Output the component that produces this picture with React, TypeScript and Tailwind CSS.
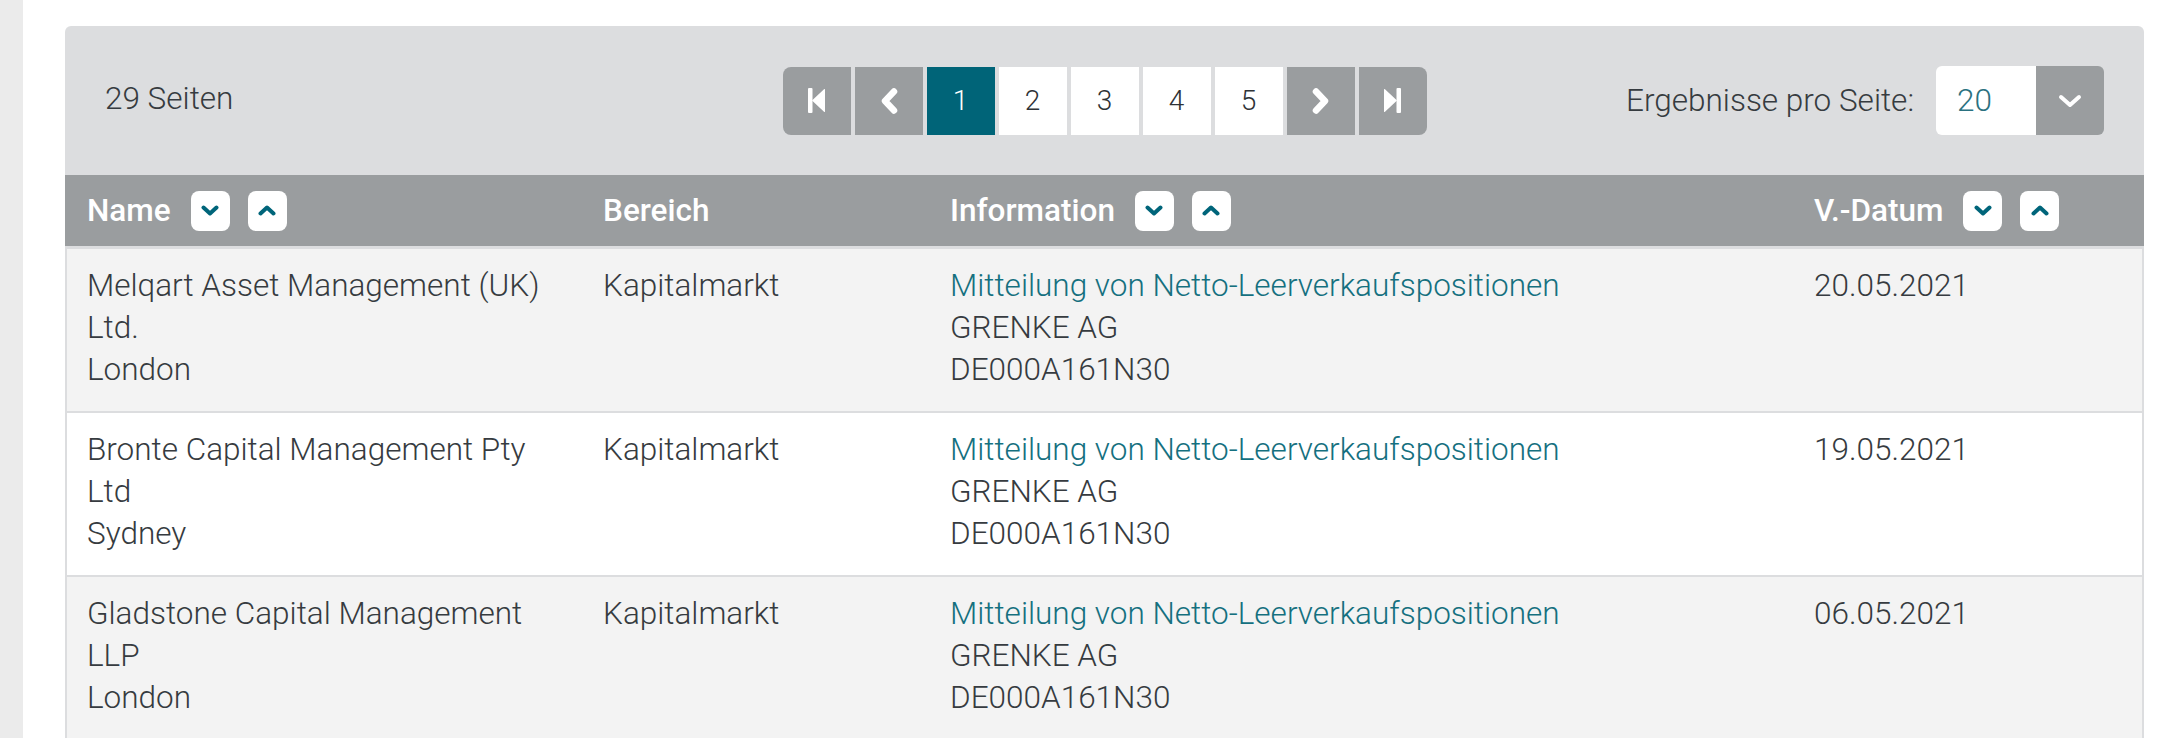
import React from "react";

type Entry = {
  name: string;
  city: string;
  area: string;
  title: string;
  issuer: string;
  isin: string;
  date: string;
};

const entries: Entry[] = [
  {
    name: "Melqart Asset Management (UK) Ltd.",
    city: "London",
    area: "Kapitalmarkt",
    title: "Mitteilung von Netto-Leerverkaufspositionen",
    issuer: "GRENKE AG",
    isin: "DE000A161N30",
    date: "20.05.2021",
  },
  {
    name: "Bronte Capital Management Pty Ltd",
    city: "Sydney",
    area: "Kapitalmarkt",
    title: "Mitteilung von Netto-Leerverkaufspositionen",
    issuer: "GRENKE AG",
    isin: "DE000A161N30",
    date: "19.05.2021",
  },
  {
    name: "Gladstone Capital Management LLP",
    city: "London",
    area: "Kapitalmarkt",
    title: "Mitteilung von Netto-Leerverkaufspositionen",
    issuer: "GRENKE AG",
    isin: "DE000A161N30",
    date: "06.05.2021",
  },
];

const SortButton: React.FC<{ up?: boolean }> = ({ up }) => (
  <span className="flex h-[40px] w-[39px] items-center justify-center rounded-lg bg-white">
    <svg
      width="18"
      height="11"
      viewBox="0 0 18 11"
      fill="none"
      stroke="#00657a"
      strokeWidth="4"
      strokeLinecap="round"
      strokeLinejoin="round"
    >
      <path d={up ? "M2.5 8.5L9 2.5l6.5 6" : "M2.5 2.5L9 8.5l6.5-6"} />
    </svg>
  </span>
);

const HeadCell: React.FC<{ label: string; sortable?: boolean }> = ({ label, sortable }) => (
  <div className="flex items-center pl-5">
    <span className="mr-5">{label}</span>
    {sortable && (
      <div className="flex gap-[18px]">
        <SortButton />
        <SortButton up />
      </div>
    )}
  </div>
);

const navBtn = "flex h-[68px] w-[68px] items-center justify-center bg-[#9a9d9f]";

const StepIcon: React.FC<{ flip?: boolean }> = ({ flip }) => (
  <svg width="17" height="25" viewBox="0 0 17 25" fill="#fff" className={flip ? "-scale-x-100" : ""}>
    <rect x="0" y="0" width="4.5" height="25" rx="1" />
    <path d="M4 12.5L16 1.2c.4-.4 1-.1 1 .4v21.8c0 .5-.6.8-1 .4z" />
  </svg>
);

const ChevronIcon: React.FC<{ flip?: boolean }> = ({ flip }) => (
  <svg
    width="20"
    height="28"
    viewBox="0 0 20 28"
    fill="none"
    stroke="#fff"
    strokeWidth="6.5"
    strokeLinecap="round"
    strokeLinejoin="round"
    className={flip ? "-scale-x-100" : ""}
  >
    <path d="M15 4.5L6 14l9 9.5" />
  </svg>
);

export default function App() {
  return (
    <div className="flex min-h-[738px] w-[2159px] bg-white font-[Roboto,sans-serif] text-[31.5px] font-light text-[#363b40]">
      <div className="w-[23px] shrink-0 bg-[#ebebeb]" />
      <div className="flex-1 pl-[42px] pr-[15px] pt-[26px]">
        <div className="overflow-hidden rounded-t-md bg-[#dcdddf]">
          {/* top bar */}
          <div className="grid h-[149px] grid-cols-[1fr_auto_1fr] items-center px-10">
            <span className="-mt-1">29 Seiten</span>

            <div className="flex gap-1 overflow-hidden rounded-lg">
              <button className={navBtn}>
                <StepIcon />
              </button>
              <button className={navBtn}>
                <ChevronIcon />
              </button>
              {[1, 2, 3, 4, 5].map((p) => (
                <button
                  key={p}
                  className={
                    p === 1
                      ? "flex h-[68px] w-[68px] items-center justify-center bg-[#006478] text-[28px] text-white"
                      : "flex h-[68px] w-[68px] items-center justify-center bg-white text-[28px] text-[#2e3236]"
                  }
                >
                  {p}
                </button>
              ))}
              <button className={navBtn}>
                <ChevronIcon flip />
              </button>
              <button className={navBtn}>
                <StepIcon flip />
              </button>
            </div>

            <div className="flex items-center justify-self-end gap-[22px]">
              <span>Ergebnisse pro Seite:</span>
              <div className="flex h-[69px] overflow-hidden rounded-md">
                <div className="flex w-[100px] items-center bg-white pl-[21px] text-[#2a7180]">20</div>
                <div className="flex w-[68px] items-center justify-center bg-[#9a9d9f]">
                  <svg
                    width="24"
                    height="14"
                    viewBox="0 0 24 14"
                    fill="none"
                    stroke="#fff"
                    strokeWidth="4"
                    strokeLinecap="round"
                    strokeLinejoin="round"
                  >
                    <path d="M3 3l9 8 9-8" />
                  </svg>
                </div>
              </div>
            </div>
          </div>

          {/* table header */}
          <div className="grid h-[71px] grid-cols-[516px_347px_864px_1fr] bg-[#9a9d9f] px-[2px] font-medium text-white">
            <HeadCell label="Name" sortable />
            <HeadCell label="Bereich" />
            <HeadCell label="Information" sortable />
            <HeadCell label="V.-Datum" sortable />
          </div>

          {/* rows */}
          <div className="flex flex-col gap-[2px] px-[2px] pt-[3px]">
            {entries.map((e, i) => (
              <div
                key={e.date}
                className={`grid grid-cols-[516px_347px_864px_1fr] pt-4 pb-5 leading-[42px] ${
                  i % 2 === 0 ? "bg-[#f3f3f3]" : "bg-white"
                }`}
              >
                <div className="pl-5 pr-[22px]">
                  <div>{e.name}</div>
                  <div>{e.city}</div>
                </div>
                <div className="pl-5">{e.area}</div>
                <div className="pl-5">
                  <a className="block text-[#15707f]" href="#">
                    {e.title}
                  </a>
                  <div>{e.issuer}</div>
                  <div>{e.isin}</div>
                </div>
                <div className="pl-5">{e.date}</div>
              </div>
            ))}
          </div>
        </div>
      </div>
    </div>
  );
}
